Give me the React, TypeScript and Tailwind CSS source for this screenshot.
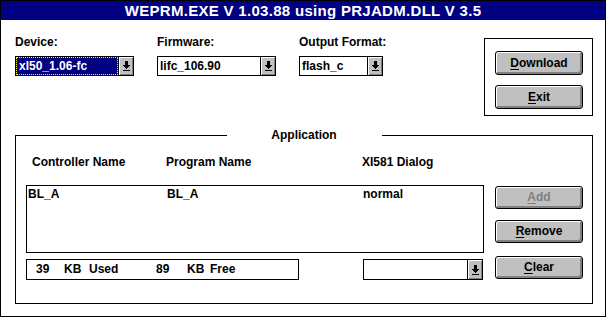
import { type JSX, type ReactNode } from 'react'

function DropArrow(): JSX.Element {
  return (
    <svg width="7" height="10" viewBox="0 0 7 10" shapeRendering="crispEdges" fill="#000">
      <rect x="2" y="0" width="3" height="4" />
      <rect x="0" y="4" width="7" height="1" />
      <rect x="1" y="5" width="5" height="1" />
      <rect x="2" y="6" width="3" height="1" />
      <rect x="3" y="7" width="1" height="1" />
      <rect x="0" y="9" width="7" height="1" />
    </svg>
  )
}

function Combo({ value, className, selected }: { value: string; className: string; selected?: boolean }): JSX.Element {
  return (
    <div className={`flex border border-black bg-white ${className}`}>
      <div className="flex min-w-0 flex-1 items-center">
        {selected ? (
          <div className="flex h-full w-full items-center border border-dotted border-[#ffff00] bg-[#000080] pl-[2px] text-white">
            {value}
          </div>
        ) : (
          <span className="pl-[2px]">{value}</span>
        )}
      </div>
      <div className="flex w-[15px] items-center justify-center border-l border-black bg-[#c0c0c0] shadow-[inset_1px_1px_0_#fff,inset_-1px_-1px_0_#808080]">
        <DropArrow />
      </div>
    </div>
  )
}

function Btn({ children, disabled, className = '' }: { children: ReactNode; disabled?: boolean; className?: string }): JSX.Element {
  return (
    <button
      type="button"
      className={`flex h-[23px] w-[88px] items-center justify-center rounded-[3px] border border-black bg-[#c0c0c0] font-bold shadow-[inset_1px_1px_0_#fff,inset_-2px_-2px_0_#808080] ${disabled ? 'text-[#808080]' : 'text-black'} ${className}`}
    >
      {children}
    </button>
  )
}

export default function App(): JSX.Element {
  return (
    <div className="h-[317px] w-[608px] bg-white font-['Liberation_Sans',Arial,sans-serif] text-[12px] leading-[15px] text-black">
      <div className="flex h-[317px] w-[606px] flex-col border border-black">
        <div className="h-[19px] whitespace-nowrap bg-[#000080] text-center text-[15px] font-bold leading-[19px] tracking-[0.3px] text-white">
          WEPRM.EXE V 1.03.88 using PRJADM.DLL V 3.5
        </div>

        <div className="flex flex-1 flex-col pl-[14px] pr-[12px]">
          {/* top row */}
          <div className="flex items-start">
            <div className="w-[119px] pt-[15px]">
              <div className="font-bold">Device:</div>
              <Combo value="xl50_1.06-fc" selected className="mt-[6px] h-[20px] w-[119px] font-bold" />
            </div>
            <div className="ml-[23px] w-[119px] pt-[15px]">
              <div className="font-bold">Firmware:</div>
              <Combo value="lifc_106.90" className="mt-[6px] h-[20px] w-[119px] font-bold" />
            </div>
            <div className="ml-[23px] w-[84px] pt-[15px]">
              <div className="whitespace-nowrap font-bold">Output Format:</div>
              <Combo value="flash_c" className="mt-[6px] h-[20px] w-[84px] font-bold" />
            </div>
            <div className="ml-auto mt-[18px] flex h-[78px] w-[109px] flex-col gap-[10px] border border-black pl-[10px] pt-[12px]">
              <Btn className="h-[24px]"><span><u className="underline-offset-2">D</u>ownload</span></Btn>
              <Btn className="h-[24px]"><span><u className="underline-offset-2">E</u>xit</span></Btn>
            </div>
          </div>

          {/* application group */}
          <fieldset className="mt-[12px] h-[176px] w-[578px] border border-black">
            <legend className="mx-auto w-[155px] text-center font-bold">Application</legend>
            <div className="flex pl-[10px]">
              <div className="flex w-[458px] flex-col">
                <div className="mt-[12px] flex pl-[6px] font-bold">
                  <span className="w-[134px]">Controller Name</span>
                  <span className="w-[196px]">Program Name</span>
                  <span>XI581 Dialog</span>
                </div>
                <div className="mt-[15px] h-[68px] w-[458px] border border-black pl-[1px] pt-[1px] font-bold">
                  <div className="flex">
                    <span className="w-[139px]">BL_A</span>
                    <span className="w-[196px]">BL_A</span>
                    <span>normal</span>
                  </div>
                </div>
                <div className="mt-[6px] flex items-start justify-between pr-[1px]">
                  <div className="flex h-[21px] w-[273px] items-center border border-black pl-[9px] font-bold">
                    <span className="w-[28px]">39</span>
                    <span className="w-[25px]">KB</span>
                    <span className="w-[67px]">Used</span>
                    <span className="w-[31px]">89</span>
                    <span className="w-[23px]">KB</span>
                    <span>Free</span>
                  </div>
                  <Combo value="" className="h-[21px] w-[120px]" />
                </div>
              </div>
              <div className="ml-[11px] flex w-[88px] flex-col pt-[43px]">
                <Btn disabled><span><u className="underline-offset-2">A</u>dd</span></Btn>
                <Btn className="mt-[11px]"><span><u className="underline-offset-2">R</u>emove</span></Btn>
                <Btn className="mt-[13px]"><span><u className="underline-offset-2">C</u>lear</span></Btn>
              </div>
            </div>
          </fieldset>
        </div>
      </div>
    </div>
  )
}
